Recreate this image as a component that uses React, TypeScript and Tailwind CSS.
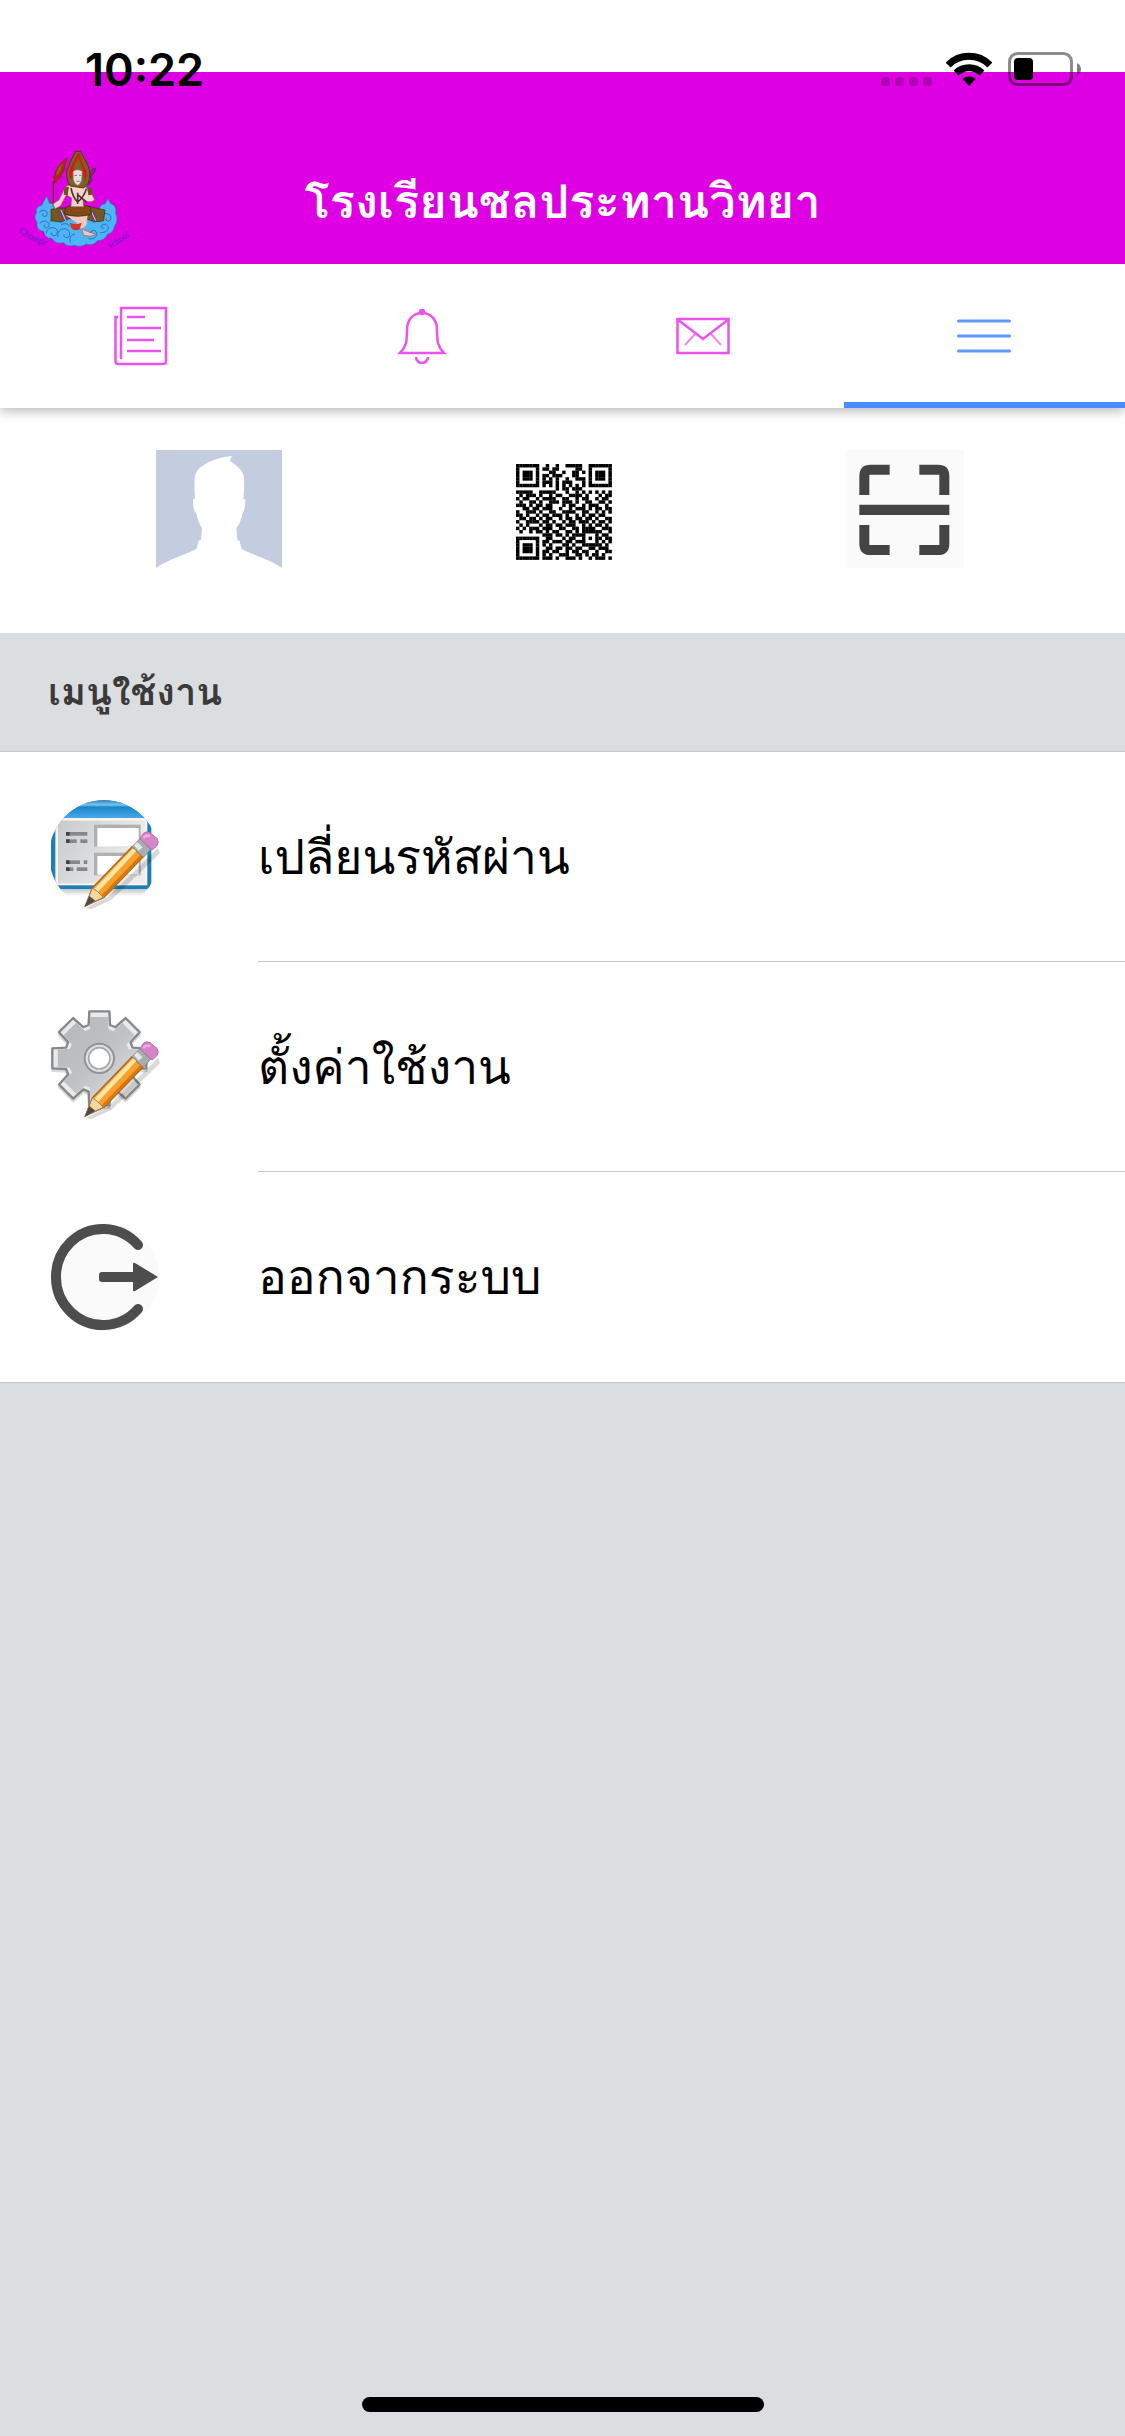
import { useState } from 'react';
import type { ReactNode } from 'react';

const qrRows = [
  '11111110010010011111001111111',
  '10000010110110000011001000001',
  '10111010001100100110101011101',
  '10111010110111000110001011101',
  '10111010101010010011101011101',
  '10000010111010111000101000001',
  '11111110101010101010101111111',
  '00000000000010110111000000000',
  '11111001111100010010101010101',
  '01011101001011001111010001011',
  '10110010111100110010110010110',
  '01001101001110111010011001101',
  '11101011011000101100101110010',
  '00110110111001001011101011011',
  '10011101001100111100110010101',
  '11010010110111010010101101100',
  '01101101011001011011011010011',
  '10011110110100101101110101101',
  '01010001011011011100101011010',
  '10101110111001100110111100111',
  '01001011010110011010111111001',
  '00000000111011010111100010110',
  '11111110011000101100101011011',
  '10000010110111011011100010101',
  '10111010101000110100111111010',
  '10111010011011011011001101110',
  '10111010110110010110110010011',
  '10000010101001110011010110100',
  '11111110111010011101001011101',
];

function StatusBar() {
  return (
    <div className="absolute inset-x-0 top-0 flex h-[88px] items-end justify-between pr-11 pl-[85px]">
      <time className="font-['Inter'] text-[45px] leading-9 font-semibold text-black">10:22</time>
      <div className="flex items-end pb-0.5">
        <div className="mr-[14px] flex gap-[5px]">
          <span className="size-[9px] rounded-[3px] bg-black/20" />
          <span className="size-[9px] rounded-[3px] bg-black/20" />
          <span className="size-[9px] rounded-[3px] bg-black/20" />
          <span className="size-[9px] rounded-[3px] bg-black/20" />
        </div>
        <svg className="mr-4 h-[34px] w-[46px]" viewBox="0 0 46 34" fill="none">
          <path d="M2.1 13 A29.5 29.5 0 0 1 43.9 13" stroke="#000" strokeWidth="7" />
          <path d="M10 21 A18.5 18.5 0 0 1 36 21" stroke="#000" strokeWidth="7" />
          <path d="M23 34 L16.4 27 A10 10 0 0 1 29.6 27 Z" fill="#000" />
        </svg>
        <svg className="h-[34px] w-[73px]" viewBox="0 0 73 34" fill="none">
          <rect x="1.5" y="1.5" width="62" height="31" rx="8" stroke="#000" strokeOpacity="0.45" strokeWidth="3" />
          <rect x="6" y="6" width="19" height="22" rx="4" fill="#000" />
          <path d="M69 11 Q73 13 73 17 Q73 21 69 23 Z" fill="#000" fillOpacity="0.5" />
        </svg>
      </div>
    </div>
  );
}

function SchoolLogo() {
  return (
    <svg className="h-[100px] w-[125px] overflow-visible" viewBox="45 50 375 300">
      <defs>
        <path id="logo-arc-left" d="M58 300 Q106 340 170 350" />
        <path id="logo-arc-right" d="M330 350 Q380 330 412 292" />
      </defs>
      <g stroke="#2f6fa8" strokeWidth="2">
        <path
          fill="#4db4f5"
          d="M144 194 L151 216 Q166 214 166 236 L300 240 Q302 216 318 218 L327 202 L334 216 Q354 222 350 246 Q360 268 346 286 Q342 306 326 308 Q318 328 296 328 Q280 346 262 338 Q246 350 226 342 Q206 348 194 334 Q170 340 160 322 Q136 322 134 300 Q110 298 114 272 Q102 258 112 246 Q108 226 128 222 Q134 208 144 194 Z"
        />
        <g fill="none" stroke="#2a76b4" strokeWidth="3">
          <path d="M120 244 q12 -14 24 -2 q4 12 -8 14 q-8 -2 -4 -10" />
          <path d="M122 276 q14 -14 28 0 q2 14 -10 14 q-8 -4 -2 -10" />
          <path d="M142 306 q4 -22 26 -16 q14 10 2 22 q-14 4 -12 -8" />
          <path d="M176 318 q-2 -26 22 -26 q20 6 12 24 q-14 8 -16 -6" />
          <path d="M214 334 q-6 -22 14 -26" />
          <path d="M268 322 q22 4 26 -14 q-4 -16 -18 -8 q-4 10 6 10" />
          <path d="M304 304 q26 0 24 -18 q-10 -14 -22 -2 q2 10 10 6" />
          <path d="M306 258 q8 -18 26 -8 q10 14 -4 20 q-12 -2 -6 -10" />
          <path d="M154 270 q22 -12 32 4 M186 280 q16 -8 26 4" />
        </g>
      </g>
      {/* banner */}
      <path d="M163 150 V225" stroke="#5a4312" strokeWidth="4" />
      <path d="M204 80 Q198 96 194 118 Q184 140 166 156 Q160 112 204 80 Z" fill="#d41515" stroke="#5a4312" strokeWidth="3" />
      <path d="M190 96 Q172 112 172 134 Q186 126 190 96 Z" fill="#7b6a1c" />
      {/* legs and sash */}
      <path d="M156 234 Q182 228 204 230 L272 226 Q300 232 318 236 L314 268 Q286 276 262 262 L212 262 L186 272 L156 268 Z" fill="#75581d" stroke="#3b2a0e" strokeWidth="2" />
      <path d="M180 236 L194 268 M190 234 L204 266 M272 244 L286 274 M282 238 L294 264" stroke="#6d3c8c" strokeWidth="5" />
      <path d="M186 236 L200 268 M278 242 L290 268" stroke="#d8c8d8" strokeWidth="3" />
      <path d="M200 252 Q236 258 266 252 L262 282 L248 294 L230 272 Z" fill="#f3c6c0" />
      <path d="M248 292 L274 304 L290 308 Q282 318 254 312 Z" fill="#f3c6c0" stroke="#9a5a50" strokeWidth="2" />
      <path d="M212 274 Q230 282 248 274 L242 294 Q230 300 218 292 Z" fill="#d4322c" />
      <path d="M200 228 Q236 214 274 226 L278 248 Q236 262 196 248 Z" fill="#7a4c16" stroke="#3b2a0e" strokeWidth="2" />
      <path d="M208 238 L268 238" stroke="#c83228" strokeWidth="5" strokeDasharray="5 5" />
      {/* torso and arms */}
      <path d="M200 166 L218 158 L252 160 L274 178 L286 204 Q284 214 262 210 L252 206 L254 226 L216 226 L218 200 L202 190 L184 224 L168 232 L162 218 L180 206 Z" fill="#f8d3cc" stroke="#a76a5e" strokeWidth="2" />
      <path d="M196 168 L210 166 L206 192 L194 190 Z M264 168 L278 170 L280 190 L268 192 Z" fill="#6b5516" />
      <path d="M216 170 Q222 200 236 212 Q256 196 262 172 M236 184 L236 218 M236 190 L262 212" stroke="#4c3430" strokeWidth="5" fill="none" />
      <path d="M252 168 L288 118 Q292 106 282 114 Q270 126 278 146 L268 160" stroke="#5d2b55" strokeWidth="4" fill="none" />
      {/* headdress */}
      <path d="M230 60 L244 60 Q256 82 266 100 Q278 126 268 156 L254 170 L214 164 Q200 144 204 116 Q216 84 230 60 Z" fill="#7b6420" stroke="#4a3a10" strokeWidth="3" />
      <path d="M236 66 L242 66 Q246 96 262 116 Q266 136 256 150 Q258 122 237 112 Q218 120 218 146 Q204 132 214 108 Q228 88 236 66 Z" fill="#d81818" />
      <path d="M237 80 Q224 104 224 116 L252 116 Q248 98 237 80 Z" fill="#7b6420" />
      <path d="M222 120 Q236 110 250 120 L248 146 Q244 160 236 162 Q226 158 223 146 Z" fill="#e8dcdc" stroke="#8c7474" strokeWidth="2" />
      <path d="M226 132 H234 M240 132 H247 M232 150 H242" stroke="#5a4848" strokeWidth="2" />
      <text fontFamily="Liberation Serif, serif" fontSize="28" fill="#5a22d0">
        <textPath href="#logo-arc-left">Chompr</textPath>
      </text>
      <text fontFamily="Liberation Serif, serif" fontSize="28" fill="#5a22d0">
        <textPath href="#logo-arc-right">school</textPath>
      </text>
    </svg>
  );
}

function NewsIcon() {
  return (
    <svg className="h-[60px] w-[54px]" viewBox="0 0 54 60" fill="none" stroke="currentColor" strokeWidth="2.5">
      <path d="M7 53 V2 H52 V55 Q52 58 49 58 H4 Q1.500 58 1.500 55 V11 H4" />
      <path d="M13 11 H31 M13 22 H47 M13 34 H40 M13 45 H47" />
    </svg>
  );
}

function BellIcon() {
  return (
    <svg className="h-[56px] w-[50px]" viewBox="0 0 50 56" fill="none" stroke="currentColor" strokeWidth="2.5">
      <path d="M25 5 C35 5 40 13 40 22 C40 34 41 39 47 45 H3 C9 39 10 34 10 22 C10 13 15 5 25 5 Z" />
      <path d="M19 49 A6 6 0 0 0 31 49" />
      <circle cx="25" cy="4" r="2" fill="currentColor" />
    </svg>
  );
}

function MailIcon() {
  return (
    <svg className="h-[38px] w-[54px]" viewBox="0 0 54 38" fill="none" stroke="currentColor" strokeWidth="2.5">
      <rect x="1.500" y="2" width="51" height="34" />
      <path d="M1 2 L27 22 L53 2" />
      <path d="M19 17 L9 28 M35 17 L45 28" strokeWidth="2" strokeOpacity="0.7" />
    </svg>
  );
}

function MenuIcon() {
  return (
    <svg className="h-[34px] w-[54px]" viewBox="0 0 54 34" stroke="currentColor" strokeWidth="3" strokeLinecap="round">
      <path d="M1.500 2 H52.500 M1.500 17 H52.500 M1.500 32 H52.500" />
    </svg>
  );
}

function AvatarPicture() {
  return (
    <svg className="h-[118px] w-[126px]" viewBox="78 60 378 354">
      <rect x="78" y="60" width="378" height="354" fill="#c4cce0" />
      <path
        fill="#fff"
        d="M78 414 C106 394 150 380 198 358 C203 350 203 342 206 332 L213 330 L216 294 C208 284 202 268 199 250 C192 246 189 226 189 208 L195 206 C193 180 192 150 196 134 C206 104 258 82 307 78 C302 84 300 90 301 94 C322 108 338 122 341 138 C344 160 342 184 340 206 L346 208 C346 226 344 240 338 248 C334 268 328 284 319 294 L322 330 L329 332 C331 342 332 350 336 358 C384 380 428 394 456 414 Z"
      />
    </svg>
  );
}

function QrPicture() {
  return (
    <svg className="size-[118px]" viewBox="0 0 118 118">
      <g transform="translate(11 14) scale(3.3)">
        {qrRows.map((row, y) =>
          row.split('').map((bit, x) => (bit === '1' ? <rect key={`${x}-${y}`} x={x} y={y} width="1.05" height="1.05" /> : null))
        )}
      </g>
    </svg>
  );
}

function ScanPicture() {
  return (
    <svg className="size-[118px]" viewBox="80 60 354 354">
      <rect x="80" y="60" width="354" height="354" fill="#fafafa" />
      <path
        fill="#444"
        d="M120 195 V138 Q120 104 154 104 H211 V134 H150 V195 Z M300 104 H356 Q390 104 390 138 V195 H360 V134 H300 Z M120 224 H390 V255 H120 Z M120 285 H150 V345 H211 V375 H154 Q120 375 120 341 Z M360 285 H390 V341 Q390 375 356 375 H300 V345 H360 Z"
      />
    </svg>
  );
}

function Pencil() {
  return (
    <g>
      <path d="M112 330 L180 296 L330 150 L336 166 L190 306 L128 334 Z" fill="#000" opacity="0.15" />
      <path d="M133 270 L252 147 L286 176 L168 298 L112 324 Z" fill="#f9a02c" stroke="#a8621c" strokeWidth="4" />
      <path d="M139 272 L256 150 L266 158 L150 282 Z" fill="#ffe3a0" />
      <path d="M161 292 L278 170 L284 176 L170 296 Z" fill="#d9780f" />
      <path d="M133 270 L148 280 L166 298 L112 324 Z" fill="#f4d79c" stroke="#a8804a" strokeWidth="3" />
      <path d="M124 294 L142 308 L110 326 Z" fill="#4c4a4c" />
      <path d="M252 146 L276 122 L308 154 L286 178 Z" fill="#a9adb0" stroke="#85898c" strokeWidth="3" />
      <path d="M258 142 L268 132 L284 148 L272 158 Z" fill="#e4e6e8" />
      <path d="M276 122 L286 106 Q296 98 306 104 L328 122 Q334 134 326 144 L312 156 Z" fill="#d586c6" stroke="#bb6bb0" strokeWidth="3" />
      <path d="M286 120 Q296 108 306 116" stroke="#ecb4e2" strokeWidth="7" fill="none" />
    </g>
  );
}

function FormEditIcon() {
  return (
    <svg className="size-[114px]" viewBox="0 6 342 342">
      <defs>
        <clipPath id="form-clip">
          <circle cx="168" cy="172" r="165" />
        </clipPath>
        <linearGradient id="form-bar" x1="0" y1="0" x2="0" y2="1">
          <stop offset="0" stopColor="#0f75b4" />
          <stop offset="0.3" stopColor="#7cc2ee" />
          <stop offset="0.42" stopColor="#1b86cd" />
          <stop offset="1" stopColor="#4aa9e6" />
        </linearGradient>
        <linearGradient id="form-panel" x1="0" y1="0" x2="1" y2="0.4">
          <stop offset="0" stopColor="#c9cacc" />
          <stop offset="1" stopColor="#ededee" />
        </linearGradient>
        <linearGradient id="form-shadow" x1="0" y1="0" x2="0" y2="1">
          <stop offset="0" stopColor="#a8a8aa" />
          <stop offset="1" stopColor="#fff" />
        </linearGradient>
      </defs>
      <g clipPath="url(#form-clip)">
        <rect x="6" y="262" width="312" height="32" fill="url(#form-shadow)" />
        <rect x="9" y="3" width="301" height="270" rx="4" fill="#1b80b8" />
        <rect x="9" y="3" width="301" height="58" fill="url(#form-bar)" />
        <rect x="22" y="60" width="276" height="202" fill="#fbf2ea" />
        <rect x="30" y="68" width="260" height="188" fill="url(#form-panel)" />
        <rect x="138" y="80" width="140" height="66" fill="#aeb0b2" />
        <rect x="148" y="90" width="124" height="56" fill="#fff" />
        <rect x="138" y="164" width="140" height="68" fill="#aeb0b2" />
        <rect x="148" y="174" width="124" height="56" fill="#fff" />
        <g fill="#85878a">
          <rect x="54" y="102" width="64" height="11" />
          <rect x="54" y="124" width="32" height="11" />
          <rect x="97" y="124" width="21" height="11" />
          <rect x="54" y="187" width="42" height="11" />
          <rect x="107" y="187" width="11" height="11" />
          <rect x="54" y="208" width="22" height="11" />
          <rect x="86" y="208" width="32" height="11" />
        </g>
        <g fill="#444">
          <rect x="54" y="102" width="11" height="11" />
          <rect x="54" y="124" width="11" height="11" />
          <rect x="54" y="187" width="11" height="11" />
          <rect x="54" y="208" width="11" height="11" />
        </g>
      </g>
      <Pencil />
    </svg>
  );
}

// eight flat teeth around a round body
const gearPath = (() => {
  const points: string[] = [];
  for (let i = 0; i < 8; i++) {
    const a = (i * Math.PI) / 4;
    const corners = [
      [100, -32],
      [141, -30],
      [141, 30],
      [100, 32],
    ];
    corners.forEach(([r, w]) => {
      const x = 154 + r * Math.cos(a) - w * Math.sin(a);
      const y = 151 + r * Math.sin(a) + w * Math.cos(a);
      points.push(`${x.toFixed(1)} ${y.toFixed(1)}`);
    });
  }
  return `M${points.join(' L')} Z`;
})();

function GearEditIcon() {
  return (
    <svg className="size-[114px]" viewBox="0 6 342 342">
      <defs>
        <linearGradient id="gear-fill" x1="0" y1="0" x2="1" y2="1">
          <stop offset="0" stopColor="#b4b6b8" />
          <stop offset="0.5" stopColor="#bfc1c3" />
          <stop offset="1" stopColor="#e2e6ea" />
        </linearGradient>
      </defs>
      <path d={gearPath} transform="translate(0 7)" fill="#000" stroke="#000" strokeWidth="8" strokeLinejoin="round" opacity="0.15" />
      <path d={gearPath} fill="#e9eaeb" stroke="#85888b" strokeWidth="7" strokeLinejoin="round" />
      <path d={gearPath} transform="translate(18 18) scale(0.88)" fill="url(#gear-fill)" />
      <circle cx="154" cy="151" r="44" fill="#dfe0e2" stroke="#919497" strokeWidth="6" />
      <circle cx="154" cy="151" r="32" fill="#fff" stroke="#a5a8ab" strokeWidth="5" />
      <Pencil />
    </svg>
  );
}

function LogoutIcon() {
  return (
    <svg className="size-[114px]" viewBox="0 0 114 114">
      <circle cx="57" cy="57" r="54" fill="#fafafa" />
      <path d="M90 25 A47 48 0 1 0 90 89" fill="none" stroke="#4d4d4d" strokeWidth="10" strokeLinecap="round" />
      <path d="M54 52 H85 V44 Q85 42 87 43 L110 57 L87 71 Q85 72 85 70 V62 H54 Q51 62 51 59 V55 Q51 52 54 52 Z" fill="#4d4d4d" />
    </svg>
  );
}

const tabs = [
  { id: 'news', label: 'ข่าว', icon: <NewsIcon /> },
  { id: 'alerts', label: 'แจ้งเตือน', icon: <BellIcon /> },
  { id: 'mail', label: 'ข้อความ', icon: <MailIcon /> },
  { id: 'menu', label: 'เมนู', icon: <MenuIcon /> },
];

const menuItems: { label: string; icon: ReactNode }[] = [
  { label: 'เปลี่ยนรหัสผ่าน', icon: <FormEditIcon /> },
  { label: 'ตั้งค่าใช้งาน', icon: <GearEditIcon /> },
  { label: 'ออกจากระบบ', icon: <LogoutIcon /> },
];

export default function App() {
  const [activeTab, setActiveTab] = useState('menu');

  return (
    <div className="relative flex min-h-screen flex-col bg-[#dadee0] font-['Loma','Noto_Sans',sans-serif] text-black">
      <header className="bg-white pt-[72px]">
        <div className="grid h-48 grid-cols-[160px_1fr_160px] items-end bg-[#de00e2] pb-4">
          <div className="pl-[14px]">
            <SchoolLogo />
          </div>
          <h1 className="pb-4 text-center text-[47px] leading-[60px] font-semibold text-white">โรงเรียนชลประทานวิทยา</h1>
        </div>
      </header>
      <StatusBar />

      <nav className="relative z-10 grid h-36 grid-cols-4 bg-white shadow-[0_4px_10px_rgba(0,0,0,0.25)]">
        {tabs.map((tab) => (
          <button
            key={tab.id}
            aria-label={tab.label}
            onClick={() => setActiveTab(tab.id)}
            className={`flex items-center justify-center border-y-6 border-t-transparent ${
              activeTab === tab.id ? 'border-b-[#4a8cff] text-[#5c98ff]' : 'border-b-transparent text-[#ec52ee]'
            }`}
          >
            {tab.icon}
          </button>
        ))}
      </nav>

      <section className="flex h-[225px] items-start justify-between bg-white pt-[42px] pr-[161px] pl-[156px]">
        <button aria-label="โปรไฟล์">
          <AvatarPicture />
        </button>
        <button aria-label="คิวอาร์โค้ด">
          <QrPicture />
        </button>
        <button aria-label="สแกน">
          <ScanPicture />
        </button>
      </section>

      <h2 className="flex h-[119px] items-center border-b border-[#c8c7cc] pl-12 text-[38px] leading-[48px] font-semibold text-[#3a3a3a]">
        เมนูใช้งาน
      </h2>

      <ul className="border-b border-[#c8c7cc] bg-white">
        {menuItems.map((item, i) => (
          <li key={item.label}>
            <button className="flex h-[210px] w-full items-center pl-12 text-left">
              {item.icon}
              <span
                className={`ml-24 flex flex-1 items-center self-stretch text-[48px] leading-[60px] ${
                  i < menuItems.length - 1 ? 'border-b border-[#c8c7cc]' : ''
                }`}
              >
                {item.label}
              </span>
            </button>
          </li>
        ))}
      </ul>

      <div className="mt-auto flex justify-center pb-6">
        <span className="h-[15px] w-[402px] rounded-full bg-black" />
      </div>
    </div>
  );
}
